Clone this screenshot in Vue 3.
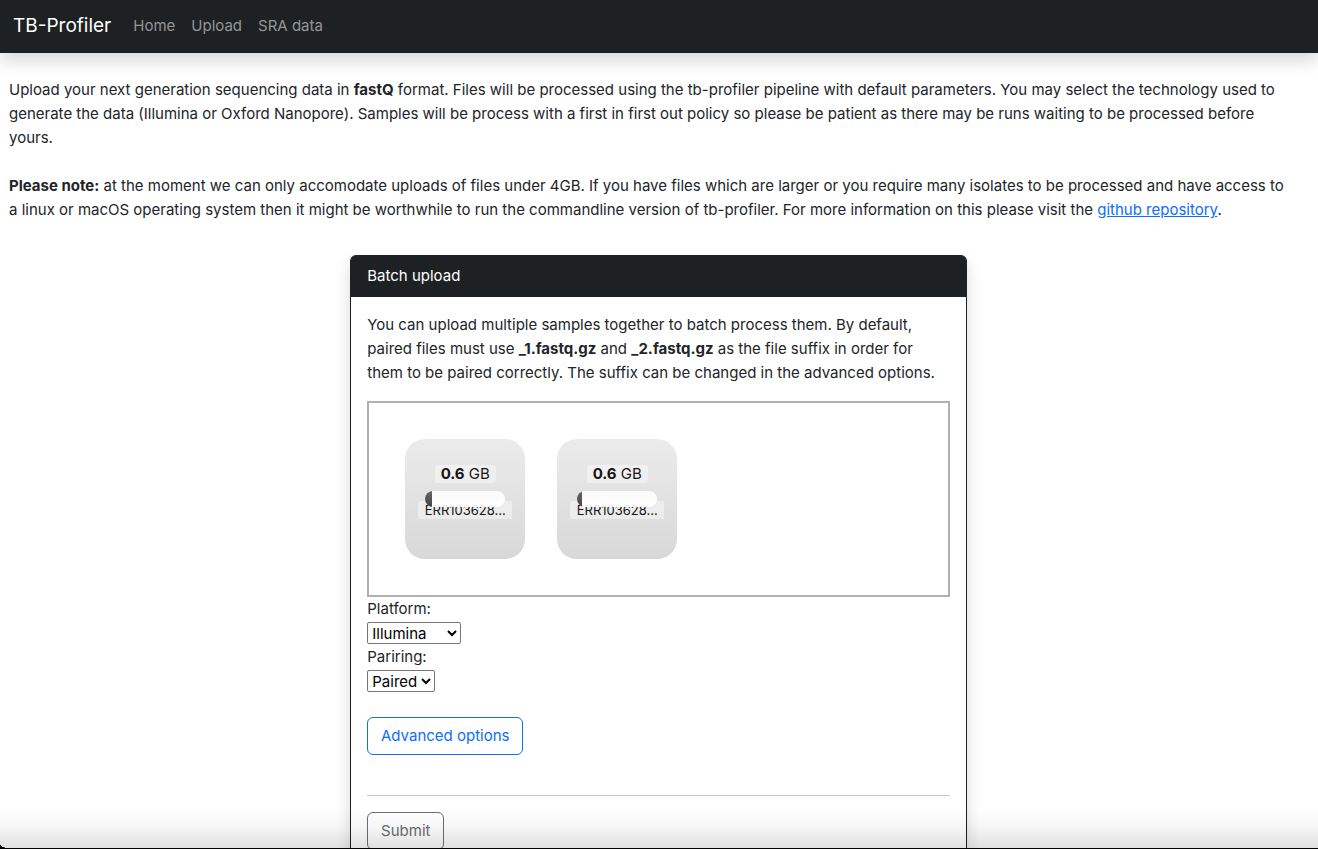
<script setup>
import { ref } from 'vue'

const links = ['Home', 'Upload', 'SRA data']
const files = [
  { id: 1, size: '0.6', name: 'ERR103628...', progress: 9 },
  { id: 2, size: '0.6', name: 'ERR103628...', progress: 6 }
]
const platform = ref('Illumina')
const pairing = ref('Paired')
</script>

<template>
  <div class="page">
    <nav class="navbar">
      <a class="brand" href="#">TB-Profiler</a>
      <a v-for="link in links" :key="link" class="nav-link" href="#">{{ link }}</a>
    </nav>

    <main class="content">
      <p class="intro">
        Upload your next generation sequencing data in <b>fastQ</b> format. Files will be processed using the tb-profiler pipeline with default parameters. You may select the technology used to<br>
        generate the data (Illumina or Oxford Nanopore). Samples will be process with a first in first out policy so please be patient as there may be runs waiting to be processed before<br>
        yours.
      </p>
      <p class="intro">
        <b>Please note:</b> at the moment we can only accomodate uploads of files under 4GB. If you have files which are larger or you require many isolates to be processed and have access to<br>
        a linux or macOS operating system then it might be worthwhile to run the commandline version of tb-profiler. For more information on this please visit the <a class="repo" href="#">github repository</a>.
      </p>

      <section class="card">
        <header class="card-header">Batch upload</header>
        <form class="card-body" @submit.prevent>
          <p class="hint">
            You can upload multiple samples together to batch process them. By default,<br>
            paired files must use <b>_1.fastq.gz</b> and <b>_2.fastq.gz</b> as the file suffix in order for<br>
            them to be paired correctly. The suffix can be changed in the advanced options.
          </p>

          <div class="dropzone">
            <div v-for="file in files" :key="file.id" class="preview">
              <div class="size"><span class="chip"><b>{{ file.size }}</b> GB</span></div>
              <div class="filename"><span class="chip">{{ file.name }}</span></div>
              <div class="progress"><div class="bar" :style="{ width: file.progress + '%' }"></div></div>
            </div>
          </div>

          <label class="label" for="platform">Platform:</label>
          <div class="field">
            <select id="platform" v-model="platform" class="select platform">
              <option>Illumina</option>
              <option>Nanopore</option>
            </select>
          </div>
          <label class="label" for="pairing">Pariring:</label>
          <div class="field">
            <select id="pairing" v-model="pairing" class="select pairing">
              <option>Paired</option>
              <option>Single</option>
            </select>
          </div>

          <button class="btn advanced" type="button">Advanced options</button>
          <hr class="rule">
          <button class="btn submit" type="submit" disabled>Submit</button>
        </form>
      </section>
    </main>
    <div class="bottom-shade"></div>
  </div>
</template>

<style>
body {
  margin: 0;
  background: #fff;
}
</style>

<style scoped>
.page {
  height: 100vh;
  overflow: hidden;
  font-family: Inter, "Liberation Sans", sans-serif;
  font-size: 15px;
  line-height: 24px;
  color: #212529;
}
.page * {
  box-sizing: border-box;
}
.navbar {
  display: flex;
  align-items: center;
  gap: 16px;
  padding: 11px 13px 12px;
  background: #1e2124;
  box-shadow: 0 8px 16px rgba(0, 0, 0, 0.15);
}
.brand {
  margin-right: 6px;
  font-size: 19px;
  line-height: 30px;
  color: #fff;
  text-decoration: none;
}
.nav-link {
  color: #949698;
  text-decoration: none;
}
.content {
  padding: 25px 10px 0 9px;
}
.intro {
  margin: 0 0 24px;
  white-space: normal;
}
.repo {
  color: #0d6efd;
}
.card {
  width: calc(50% - 33px);
  margin: 33px auto 0;
  border: 1px solid #1e2124;
  border-radius: 6px;
  background: #fff;
  box-shadow: 0 8px 16px rgba(0, 0, 0, 0.15);
}
.card-header {
  padding: 8px 16px 9px;
  background: #1e2124;
  border-radius: 4px 4px 0 0;
  color: #fff;
}
.card-body {
  padding: 16px 16px 48px;
}
.hint {
  margin: 0 0 16px;
}
.dropzone {
  display: flex;
  gap: 32px;
  min-height: 196px;
  padding: 36px;
  border: 2px solid #b0b0b0;
}
.preview {
  position: relative;
  width: 120px;
  height: 120px;
  padding: 23px 13px 0;
  border-radius: 20px;
  background: linear-gradient(#ebebeb, #d8d8d8);
  color: #161616;
  text-align: center;
}
.size {
  height: 39px;
}
.filename {
  height: 24px;
  overflow: hidden;
  white-space: nowrap;
  font-size: 13px;
}
.chip {
  display: inline-block;
  padding: 0 6px;
  border-radius: 3px;
  background: rgba(255, 255, 255, 0.4);
  line-height: 18px;
}
.filename .chip {
  display: block;
  padding: 0;
  border-radius: 3px 0 0 3px;
}
.progress {
  position: absolute;
  top: 52px;
  left: 20px;
  width: 80px;
  height: 16px;
  border-radius: 8px;
  overflow: hidden;
  background: rgba(255, 255, 255, 0.9);
}
.bar {
  height: 100%;
  background: linear-gradient(#666, #444);
}
.label {
  display: block;
}
.field {
  display: flex;
  align-items: center;
  height: 24px;
}
.select {
  height: 22px;
  padding: 0;
  border: 1px solid #767676;
  border-radius: 2px;
  background: #fff;
  color: #000;
  font: inherit;
  line-height: 20px;
}
.platform {
  width: 94px;
}
.pairing {
  width: 68px;
}
.btn {
  display: block;
  height: 38px;
  padding: 0 12px;
  border: 1px solid;
  border-radius: 6px;
  background: transparent;
  font: inherit;
}
.advanced {
  min-width: 156px;
  margin-top: 24px;
  color: #0d6efd;
}
.rule {
  margin: 40px 0 16px;
  border: 0;
  border-top: 1px solid #c7c8c9;
}
.submit {
  min-width: 77px;
  color: #6c6e70;
}
.bottom-shade {
  position: fixed;
  right: 0;
  bottom: 0;
  left: 0;
  height: 40px;
  border-bottom: 1px solid #000;
  background: linear-gradient(rgba(0, 0, 0, 0), rgba(0, 0, 0, 0.04) 50%, rgba(0, 0, 0, 0.12));
  pointer-events: none;
}
.bottom-shade::before {
  content: "";
  position: absolute;
  bottom: 0;
  left: 0;
  width: 8px;
  height: 4px;
  background: radial-gradient(ellipse at top right, transparent 95%, #000 100%);
  background: radial-gradient(8px 4px at 100% 0, transparent 95%, #000 100%);
}
</style>
